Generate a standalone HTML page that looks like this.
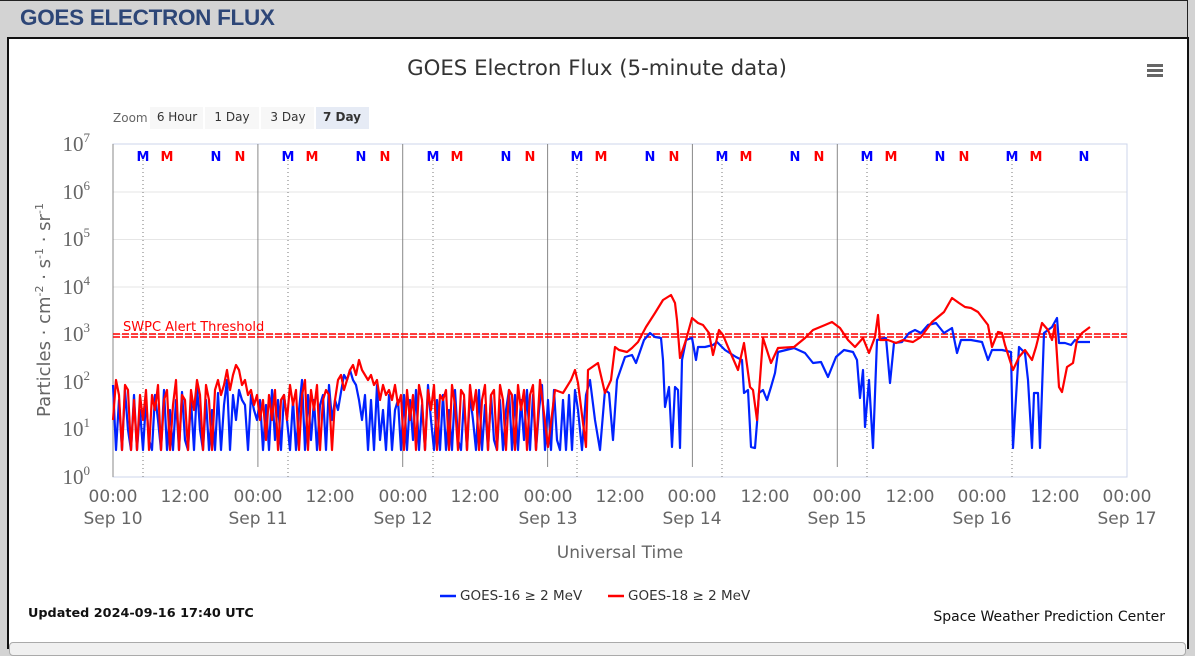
<!DOCTYPE html>
<html><head><meta charset="utf-8"><style>
html,body{margin:0;padding:0;width:1195px;height:652px;overflow:hidden;background:#d3d3d3;font-family:"Liberation Sans",sans-serif;}
.top{position:absolute;left:0;top:0;width:1187px;height:1px;background:#222;}
.rline{position:absolute;left:1187px;top:0;width:1px;height:37px;background:#222;}
h1{position:absolute;left:20px;top:5px;margin:0;font-size:22.5px;font-weight:bold;color:#2d4677;letter-spacing:-0.3px;}
.panel{position:absolute;left:7px;top:37px;width:1178px;height:610px;background:#fff;border:2px solid #111;border-bottom:none;}
.tabs{position:absolute;left:9px;top:642px;width:1175px;height:12px;background:#f0f0f0;border:1px solid #aaa;border-radius:4px;}
svg{position:absolute;left:0;top:0;}
</style></head><body>
<div class="top"></div><div class="rline"></div>
<h1>GOES ELECTRON FLUX</h1>
<div class="panel"></div>
<div class="tabs"></div>
<svg width="1195" height="652" xmlns="http://www.w3.org/2000/svg" font-family="DejaVu Sans, Liberation Sans, sans-serif">
<text x="597" y="75" text-anchor="middle" font-size="21.3" fill="#333">GOES Electron Flux (5-minute data)</text>
<g fill="#666"><rect x="1147" y="64" width="16" height="3"/><rect x="1147" y="69" width="16" height="3"/><rect x="1147" y="74" width="16" height="3"/></g>
<text x="113" y="122" font-size="12" fill="#666">Zoom</text>
<rect x="150" y="107" width="53" height="22" fill="#f7f7f7"/><rect x="205" y="107" width="54" height="22" fill="#f7f7f7"/><rect x="261" y="107" width="53" height="22" fill="#f7f7f7"/><rect x="316" y="107" width="53" height="22" fill="#e6ebf5"/>
<g font-size="12" fill="#333" text-anchor="middle"><text x="177" y="121">6 Hour</text><text x="232" y="121">1 Day</text><text x="288" y="121">3 Day</text><text x="342" y="121" font-weight="bold">7 Day</text></g>
<g stroke="#e6e6e6" stroke-width="1"><line x1="113" x2="1127" y1="192" y2="192"/><line x1="113" x2="1127" y1="239.5" y2="239.5"/><line x1="113" x2="1127" y1="287" y2="287"/><line x1="113" x2="1127" y1="334.5" y2="334.5"/><line x1="113" x2="1127" y1="382" y2="382"/><line x1="113" x2="1127" y1="429.5" y2="429.5"/></g>
<rect x="113" y="144" width="1014" height="333" fill="none" stroke="#ccd6eb" stroke-width="1"/>
<line x1="113" x2="113" y1="144" y2="477" stroke="#888"/>
<g stroke="#888" stroke-width="1"><line x1="257.9" x2="257.9" y1="144" y2="467"/><line x1="402.7" x2="402.7" y1="144" y2="467"/><line x1="547.6" x2="547.6" y1="144" y2="467"/><line x1="692.4" x2="692.4" y1="144" y2="467"/><line x1="837.3" x2="837.3" y1="144" y2="467"/></g>
<g stroke="#777" stroke-dasharray="1,3"><line x1="143" x2="143" y1="160" y2="477"/><line x1="288" x2="288" y1="160" y2="477"/><line x1="433" x2="433" y1="160" y2="477"/><line x1="577" x2="577" y1="160" y2="477"/><line x1="722" x2="722" y1="160" y2="477"/><line x1="867" x2="867" y1="160" y2="477"/><line x1="1012" x2="1012" y1="160" y2="477"/></g>
<g font-size="13" font-weight="bold" text-anchor="middle">
<text x="143" y="161" fill="#0000ff">M</text><text x="167" y="161" fill="#ff0000">M</text><text x="216" y="161" fill="#0000ff">N</text><text x="240" y="161" fill="#ff0000">N</text>
<text x="288" y="161" fill="#0000ff">M</text><text x="312" y="161" fill="#ff0000">M</text><text x="361" y="161" fill="#0000ff">N</text><text x="385" y="161" fill="#ff0000">N</text>
<text x="433" y="161" fill="#0000ff">M</text><text x="457" y="161" fill="#ff0000">M</text><text x="506" y="161" fill="#0000ff">N</text><text x="530" y="161" fill="#ff0000">N</text>
<text x="577" y="161" fill="#0000ff">M</text><text x="601" y="161" fill="#ff0000">M</text><text x="650" y="161" fill="#0000ff">N</text><text x="674" y="161" fill="#ff0000">N</text>
<text x="722" y="161" fill="#0000ff">M</text><text x="746" y="161" fill="#ff0000">M</text><text x="795" y="161" fill="#0000ff">N</text><text x="819" y="161" fill="#ff0000">N</text>
<text x="867" y="161" fill="#0000ff">M</text><text x="891" y="161" fill="#ff0000">M</text><text x="940" y="161" fill="#0000ff">N</text><text x="964" y="161" fill="#ff0000">N</text>
<text x="1012" y="161" fill="#0000ff">M</text><text x="1036" y="161" fill="#ff0000">M</text><text x="1084" y="161" fill="#0000ff">N</text>
</g>
<g font-family="Liberation Serif, serif" font-size="21" fill="#666" text-anchor="end">
<text x="90" y="151">10<tspan font-size="13" dy="-9">7</tspan></text>
<text x="90" y="199">10<tspan font-size="13" dy="-9">6</tspan></text>
<text x="90" y="246">10<tspan font-size="13" dy="-9">5</tspan></text>
<text x="90" y="294">10<tspan font-size="13" dy="-9">4</tspan></text>
<text x="90" y="341">10<tspan font-size="13" dy="-9">3</tspan></text>
<text x="90" y="389">10<tspan font-size="13" dy="-9">2</tspan></text>
<text x="90" y="436">10<tspan font-size="13" dy="-9">1</tspan></text>
<text x="90" y="484">10<tspan font-size="13" dy="-9">0</tspan></text>
</g>
<text transform="translate(50,310) rotate(-90)" text-anchor="middle" font-size="18" fill="#666">Particles · cm<tspan font-size="11" dy="-7">-2</tspan><tspan dy="7"> · s</tspan><tspan font-size="11" dy="-7">-1</tspan><tspan dy="7"> · sr</tspan><tspan font-size="11" dy="-7">-1</tspan></text>
<g font-size="17" fill="#666" text-anchor="middle">
<text x="113" y="502">00:00</text><text x="185" y="502">12:00</text><text x="258" y="502">00:00</text><text x="330" y="502">12:00</text><text x="403" y="502">00:00</text><text x="475" y="502">12:00</text><text x="548" y="502">00:00</text><text x="620" y="502">12:00</text><text x="692" y="502">00:00</text><text x="765" y="502">12:00</text><text x="837" y="502">00:00</text><text x="910" y="502">12:00</text><text x="982" y="502">00:00</text><text x="1055" y="502">12:00</text><text x="1127" y="502">00:00</text>
<text x="113" y="524">Sep 10</text><text x="258" y="524">Sep 11</text><text x="403" y="524">Sep 12</text><text x="548" y="524">Sep 13</text><text x="692" y="524">Sep 14</text><text x="837" y="524">Sep 15</text><text x="982" y="524">Sep 16</text><text x="1127" y="524">Sep 17</text>
</g>
<text x="620" y="558" text-anchor="middle" font-size="17" fill="#666">Universal Time</text>
<g stroke="#ff0000" stroke-width="1.5" stroke-dasharray="7,2"><line x1="113" x2="1127" y1="334" y2="334"/><line x1="113" x2="1127" y1="337" y2="337"/></g>
<text x="123" y="331" font-size="13" fill="#ff0000">SWPC Alert Threshold</text>
<path fill="none" stroke="#0022ff" stroke-width="2.2" stroke-linejoin="round" d="M113,385 L116,450 L119,400 L122,450 L125,390 L128,430 L131,450 L134,395 L137,450 L140,410 L143,450 L146,400 L149,440 L152,450 L155,395 L158,420 L161,450 L164,390 L167,450 L170,410 L173,450 L176,400 L179,450 L182,392 L185,440 L188,450 L191,400 L194,450 L197,385 L200,430 L203,450 L206,400 L209,450 L212,410 L215,450 L218,393 L221,450 L224,405 L227,380 L230,450 L233,395 L236,420 L239,390 L242,400 L245,405 L248,450 L251,395 L254,410 L257,420 L260,400 L263,450 L266,405 L269,450 L272,390 L275,440 L278,400 L281,450 L284,395 L287,420 L290,450 L293,400 L296,450 L299,410 L302,380 L305,450 L308,395 L311,440 L314,400 L317,450 L320,405 L323,395 L326,450 L329,385 L332,420 L335,400 L338,410 L341,392 L344,375 L347,380 L350,370 L353,380 L356,385 L359,400 L362,420 L365,395 L368,450 L371,400 L374,450 L377,385 L380,440 L383,410 L386,450 L389,395 L392,450 L395,410 L398,400 L401,450 L404,395 L407,450 L410,400 L413,440 L416,390 L419,450 L422,405 L425,450 L428,385 L431,420 L434,450 L437,400 L440,450 L443,395 L446,450 L449,410 L452,450 L455,390 L458,440 L461,450 L464,400 L467,450 L470,395 L473,420 L476,450 L479,390 L482,450 L485,405 L488,450 L491,395 L494,440 L497,450 L500,400 L503,450 L506,410 L509,390 L512,450 L515,395 L518,450 L521,400 L524,440 L527,390 L530,450 L533,395 L536,450 L539,410 L542,385 L545,450 L548,400 L551,450 L554,390 L557,440 L560,450 L563,400 L566,450 L569,395 L572,450 L575,390 L578,410 L582,450 L586,395 L590,380 L595,420 L600,450 L605,390 L609,393 L613,440 L617,380 L625,357 L632,355 L636,363 L644,340 L650,333 L655,337 L661,338 L663,360 L665,407 L669,387 L672,447 L675,387 L678,390 L680,448 L682,360 L686,340 L692,338 L696,360 L698,347 L705,347 L713,345 L717,342 L725,350 L736,357 L742,360 L744,393 L748,390 L751,447 L755,448 L757,423 L759,393 L763,390 L767,400 L771,387 L775,373 L778,352 L786,350 L794,348 L805,353 L813,363 L821,362 L828,377 L836,357 L844,350 L853,352 L857,360 L860,398 L863,370 L865,427 L869,380 L873,448 L877,340 L886,338 L890,383 L894,343 L902,342 L909,333 L915,330 L921,333 L928,325 L936,323 L944,333 L952,328 L957,353 L961,340 L971,340 L982,342 L988,360 L992,350 L1002,350 L1011,352 L1013,448 L1019,347 L1025,353 L1028,380 L1032,448 L1034,393 L1038,393 L1040,448 L1044,333 L1052,327 L1057,318 L1059,343 L1065,343 L1071,345 L1075,340 L1078,342 L1090,342"/>
<path fill="none" stroke="#ff0000" stroke-width="2.2" stroke-linejoin="round" d="M113,420 L116,380 L119,395 L122,450 L125,385 L128,390 L131,450 L134,400 L137,450 L140,395 L143,420 L146,390 L149,450 L152,395 L155,410 L158,385 L161,450 L164,400 L167,390 L170,450 L173,405 L176,380 L179,450 L182,395 L185,400 L188,450 L191,390 L194,410 L197,380 L200,395 L203,450 L206,385 L209,400 L212,450 L215,390 L218,380 L221,395 L224,385 L227,370 L230,390 L233,375 L236,365 L239,370 L242,385 L245,380 L248,395 L251,390 L254,405 L257,395 L260,420 L263,400 L266,440 L269,395 L272,420 L275,390 L278,450 L281,400 L284,395 L287,420 L290,385 L293,405 L296,390 L299,450 L302,395 L305,380 L308,450 L311,390 L314,410 L317,385 L320,450 L323,400 L326,390 L329,395 L332,450 L335,400 L338,380 L341,375 L344,390 L347,380 L350,370 L353,365 L356,375 L359,360 L362,370 L365,375 L368,380 L371,375 L374,385 L377,380 L380,400 L383,385 L386,395 L389,390 L392,400 L395,385 L398,405 L401,395 L404,450 L407,390 L410,420 L413,395 L416,450 L419,385 L422,400 L425,450 L428,390 L431,410 L434,385 L437,450 L440,395 L443,400 L446,390 L449,450 L452,385 L455,405 L458,450 L461,390 L464,395 L467,450 L470,385 L473,410 L476,390 L479,450 L482,400 L485,385 L488,450 L491,395 L494,390 L497,450 L500,385 L503,400 L506,450 L509,390 L512,395 L515,450 L518,385 L521,410 L524,390 L527,450 L530,395 L533,385 L536,450 L540,380 L548,447 L555,390 L563,393 L571,380 L575,370 L578,383 L586,447 L588,370 L598,363 L605,393 L611,380 L615,347 L619,350 L627,352 L632,348 L638,342 L646,327 L655,313 L663,300 L671,295 L675,303 L677,320 L680,358 L686,340 L692,318 L698,323 L703,325 L709,333 L713,355 L719,330 L723,335 L728,347 L738,370 L744,343 L750,387 L753,390 L757,420 L763,338 L771,363 L778,348 L794,347 L805,338 L813,330 L825,325 L832,322 L840,328 L848,340 L855,347 L863,338 L869,353 L875,337 L878,315 L880,340 L888,340 L896,343 L903,340 L913,342 L921,337 L932,322 L944,312 L952,298 L959,303 L965,307 L971,308 L978,312 L988,325 L992,347 L998,332 L1002,333 L1005,345 L1013,370 L1019,357 L1025,350 L1032,360 L1036,347 L1042,323 L1048,330 L1052,340 L1055,325 L1059,387 L1062,392 L1067,367 L1073,363 L1077,340 L1082,333 L1090,327"/>
<line x1="440" x2="456" y1="596" y2="596" stroke="#0022ff" stroke-width="2.5"/>
<text x="460" y="600" font-size="13.5" fill="#333">GOES-16 ≥ 2 MeV</text>
<line x1="608" x2="624" y1="596" y2="596" stroke="#ff0000" stroke-width="2.5"/>
<text x="628" y="600" font-size="13.5" fill="#333">GOES-18 ≥ 2 MeV</text>
<text x="28" y="617" font-size="12.8" font-weight="bold" fill="#111">Updated 2024-09-16 17:40 UTC</text>
<text x="1165" y="621" font-size="14" fill="#111" text-anchor="end">Space Weather Prediction Center</text>
</svg>
</body></html>
